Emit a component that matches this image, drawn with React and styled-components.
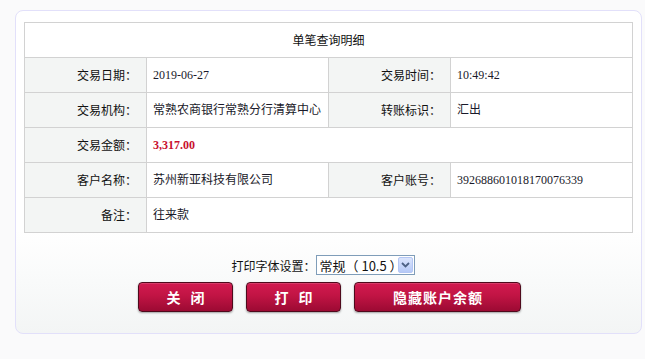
import React, { useState } from "react";
import styled, { createGlobalStyle } from "styled-components";

const GlobalStyle = createGlobalStyle`
  html, body {
    margin: 0;
    padding: 0;
    background: #fafafb;
  }
  body {
    font-family: "Noto Sans CJK SC", "Liberation Sans", sans-serif;
    font-size: 12px;
    color: #111;
  }
`;

const rows = [
  [
    { label: "交易日期：", value: "2019-06-27" },
    { label: "交易时间：", value: "10:49:42" },
  ],
  [
    { label: "交易机构：", value: "常熟农商银行常熟分行清算中心" },
    { label: "转账标识：", value: "汇出" },
  ],
  [{ label: "交易金额：", value: "3,317.00", amount: true }],
  [
    { label: "客户名称：", value: "苏州新亚科技有限公司" },
    { label: "客户账号：", value: "392688601018170076339" },
  ],
  [{ label: "备注：", value: "往来款" }],
];

const Page = styled.div`
  width: 645px;
  height: 359px;
  padding: 10px 3px 0 15px;
  box-sizing: border-box;
`;

const Panel = styled.div`
  width: 627px;
  height: 324px;
  box-sizing: border-box;
  border: 1px solid #e2e0fa;
  border-radius: 8px;
  background: linear-gradient(to bottom, #ffffff 0%, #ffffff 68%, #f3f5f5 100%);
  padding: 11px 8px 0 8px;
  display: flex;
  flex-direction: column;
`;

const Table = styled.table`
  width: 609px;
  border-collapse: collapse;
  table-layout: fixed;
  border: 1px solid #d2d2d2;
`;

const Cell = styled.td`
  height: 35px;
  box-sizing: border-box;
  line-height: 14px;
  border: 1px solid #d2d2d2;
  padding: 0 ${(p) => (p.$label ? "9px" : "6px")};
  text-align: ${(p) => (p.$label ? "right" : "left")};
  background: ${(p) => (p.$label ? "#f3f5f4" : "#ffffff")};
  font-family: ${(p) =>
    p.$label
      ? `"Noto Sans CJK SC", sans-serif`
      : `"Liberation Serif", "Noto Sans CJK SC", serif`};
  font-size: 12px;
  font-weight: ${(p) => (p.$amount ? "bold" : "normal")};
  color: ${(p) => (p.$amount ? "#c8102e" : p.$label ? "#111" : "#1a1a2a")};
  white-space: nowrap;
`;

const HeadCell = styled.td`
  height: 35px;
  box-sizing: border-box;
  line-height: 14px;
  border: 1px solid #d2d2d2;
  text-align: center;
  font-size: 12px;
  color: #111;
`;

const Controls = styled.div`
  display: flex;
  flex-direction: column;
  align-items: center;
  margin-top: 22px;
  gap: 7px;
`;

const FontRow = styled.div`
  display: flex;
  align-items: center;
  margin-left: -11px;
`;

const FontLabel = styled.span`
  font-size: 12px;
  color: #111;
`;

const SelectWrap = styled.div`
  position: relative;
  width: 99px;
  height: 20px;
`;

const Select = styled.select`
  appearance: none;
  -webkit-appearance: none;
  width: 100%;
  height: 100%;
  box-sizing: border-box;
  border: 1px solid #7f9db9;
  border-radius: 0;
  background: #fff;
  padding: 0 0 0 3px;
  font-family: "Noto Sans CJK SC", "Liberation Sans", sans-serif;
  font-size: 13px;
  color: #111;
  outline: none;
`;

const Arrow = styled.span`
  position: absolute;
  right: 2px;
  top: 2px;
  width: 15px;
  height: 16px;
  box-sizing: border-box;
  border: 1px solid #b4c6f4;
  border-radius: 2px;
  background: linear-gradient(to bottom, #dbe5fd, #b6c9f7);
  display: flex;
  align-items: center;
  justify-content: center;
  pointer-events: none;
`;

const ButtonRow = styled.div`
  display: flex;
  gap: 13px;
  margin-left: 2px;
`;

const Button = styled.button`
  width: ${(p) => p.$w}px;
  height: 30px;
  box-sizing: border-box;
  border: 1px solid #4e0a1c;
  border-radius: 4px;
  background: linear-gradient(to bottom, #d21a50 0%, #c11444 45%, #9c0a33 100%);
  box-shadow: 0 1px 2px rgba(0, 0, 0, 0.35), inset 0 1px 0 rgba(255, 255, 255, 0.15);
  color: #fff;
  font-family: "Noto Sans CJK SC", sans-serif;
  font-size: 14px;
  font-weight: bold;
  letter-spacing: ${(p) => p.$ls || 0}px;
  cursor: pointer;
  padding: 0;
  text-indent: ${(p) => p.$ls || 0}px;
`;

const App = () => {
  const [size, setSize] = useState("10.5");
  return (
    <>
      <GlobalStyle />
      <Page>
        <Panel>
          <Table>
            <colgroup>
              <col style={{ width: 122 }} />
              <col style={{ width: 182 }} />
              <col style={{ width: 122 }} />
              <col style={{ width: 182 }} />
            </colgroup>
            <tbody>
              <tr>
                <HeadCell colSpan={4}>单笔查询明细</HeadCell>
              </tr>
              {rows.map((row, i) => (
                <tr key={i}>
                  {row.map((item, j) => (
                    <React.Fragment key={j}>
                      <Cell $label>{item.label}</Cell>
                      <Cell
                        $amount={item.amount}
                        colSpan={row.length === 1 ? 3 : 1}
                      >
                        {item.value}
                      </Cell>
                    </React.Fragment>
                  ))}
                </tr>
              ))}
            </tbody>
          </Table>
          <Controls>
            <FontRow>
              <FontLabel>打印字体设置：</FontLabel>
              <SelectWrap>
                <Select value={size} onChange={(e) => setSize(e.target.value)}>
                  <option value="9">小号（ 9 ）</option>
                  <option value="10.5">常规（ 10.5 ）</option>
                  <option value="12">大号（ 12 ）</option>
                </Select>
                <Arrow>
                  <svg width="9" height="6" viewBox="0 0 9 6">
                    <path d="M1 1 L4.5 4.5 L8 1" fill="none" stroke="#4d6185" strokeWidth="1.8" />
                  </svg>
                </Arrow>
              </SelectWrap>
            </FontRow>
            <ButtonRow>
              <Button $w={95} $ls={10}>关闭</Button>
              <Button $w={95} $ls={10}>打印</Button>
              <Button $w={167} $ls={1}>隐藏账户余额</Button>
            </ButtonRow>
          </Controls>
        </Panel>
      </Page>
    </>
  );
};

export default App;
